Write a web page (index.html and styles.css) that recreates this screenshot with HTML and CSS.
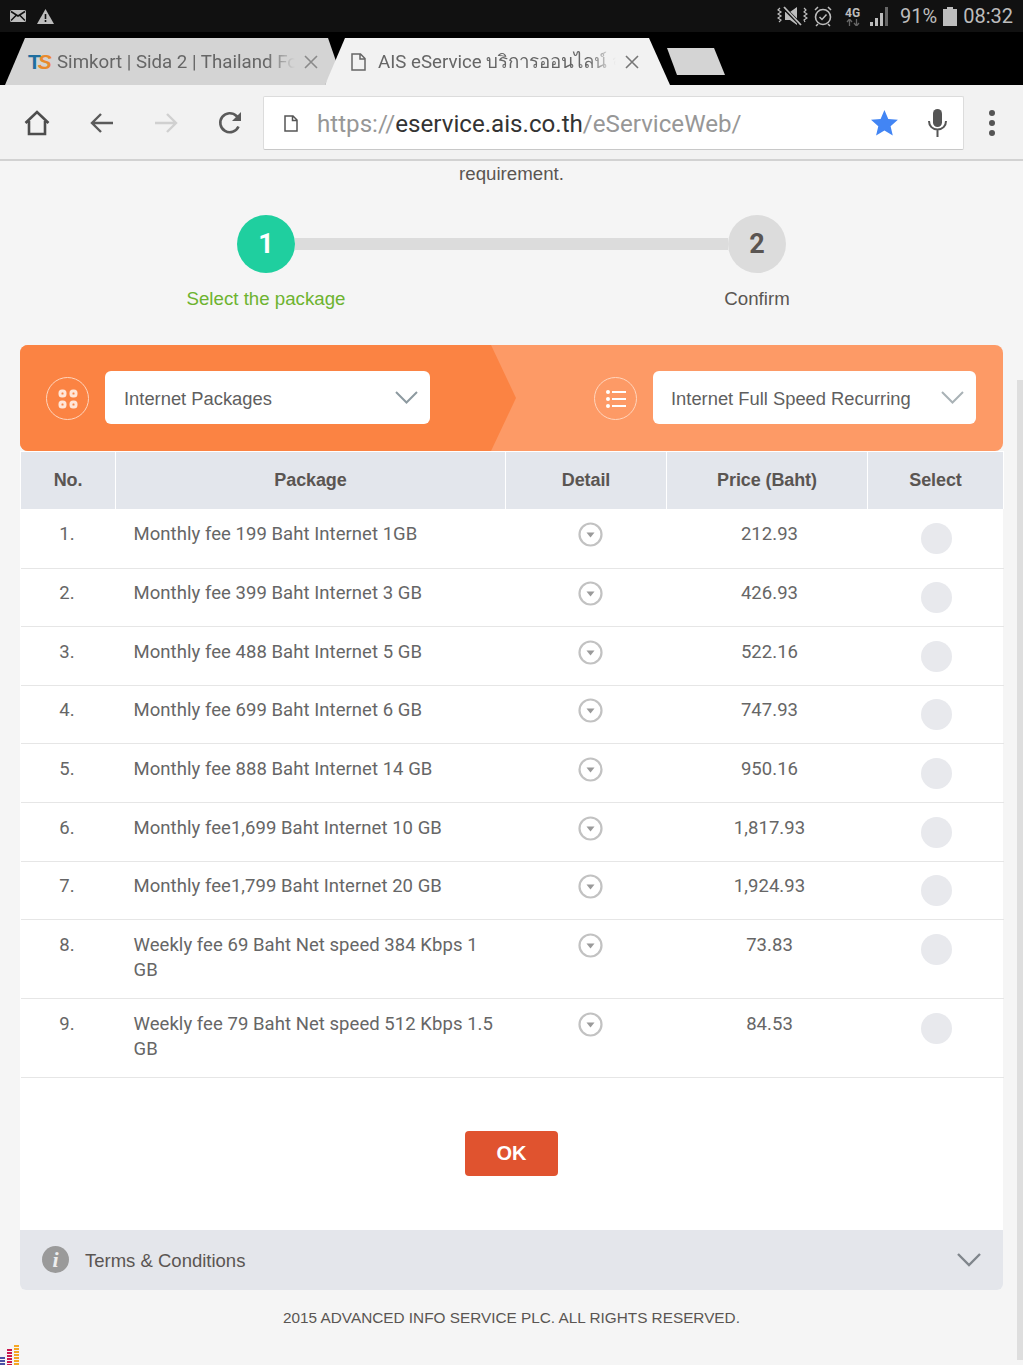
FILE: index.html
```html
<!DOCTYPE html>
<html>
    <head>
        <title>AIS eService</title>
        <link rel="stylesheet" href="styles.css">
    </head>
    <body>
        <div id="status-bar">
            <div class="status-left">
                <svg width="16" height="12" viewBox="0 0 16 12"><rect width="16" height="12" rx="1.500" fill="#bdbdbd"/><path d="M1 1.500 8 6l7-4.500M1 10.500 6 5.500M15 10.500 10 5.500" fill="none" stroke="#111" stroke-width="1.500"/></svg>
                <svg width="17" height="15" viewBox="0 0 17 15"><path d="M8.500 0 17 15H0z" fill="#bdbdbd"/><path d="M8.500 5v5M8.500 11v2" stroke="#111" stroke-width="1.600"/></svg>
            </div>
            <div class="status-right">
                <svg class="ic-mute" width="31" height="20" viewBox="0 0 31 20"><path d="M8 6h5l7-5v18l-7-5H8z" fill="#bdbdbd"/><path d="M6 1l18 18" stroke="#111" stroke-width="3.500"/><path d="M7 1l17 18" stroke="#bdbdbd" stroke-width="1.800"/><path d="M3 2 1 4l3 2-3 2 3 2-3 2 3 2-2 2M27 2l2 2-2 2 3 2-3 2 3 2-3 2 1 2" fill="none" stroke="#bdbdbd" stroke-width="1.200"/></svg>
                <svg class="ic-alarm" width="18" height="21" viewBox="0 0 18 21"><circle cx="9" cy="11" r="7.500" fill="none" stroke="#bdbdbd" stroke-width="1.600"/><path d="M5.500 11l2.500 2.500 4.500-5M1 4l3-3M17 4l-3-3M4 18l-2 2M14 18l2 2" fill="none" stroke="#bdbdbd" stroke-width="1.500"/></svg>
                <div class="net">
                    <span class="net-text">4G</span>
                    <svg width="14" height="7" viewBox="0 0 14 7"><path d="M3.500 7V1M1 3l2.500-3L6 3M10.500 0v6M8 4l2.500 3L13 4" fill="none" stroke="#666" stroke-width="1.300"/></svg>
                </div>
                <svg class="ic-signal" width="19" height="20" viewBox="0 0 19 20"><path d="M0 16h3v4H0zM5 12h3v8H5zM10 7h3v13h-3z" fill="#bdbdbd"/><path d="M15 1h3v19h-3z" fill="#666"/></svg>
                <span class="pct">91%</span>
                <svg class="ic-batt" width="14" height="19" viewBox="0 0 14 19"><path d="M4 0h6v2h4v17H0V2h4z" fill="#bdbdbd"/></svg>
                <span class="clock">08:32</span>
            </div>
        </div>

        <div id="tab-strip">
            <div class="tab tab-off">
                <span class="favicon"><span class="fav-t">T</span><span class="fav-s">S</span></span>
                <span class="tab-title">Simkort | Sida 2 | Thailand Fo</span>
                <svg class="tab-close" width="14" height="14" viewBox="0 0 14 14"><path d="M1 1l12 12M13 1 1 13" stroke="#8a8a8a" stroke-width="1.600"/></svg>
            </div>
            <div class="tab tab-on">
                <svg class="page-ic" width="15" height="18" viewBox="0 0 15 18"><path d="M1 1h8.500L14 5.500V17H1zM9 1v5h5" fill="none" stroke="#666" stroke-width="1.500"/></svg>
                <span class="tab-title">AIS eService บริการออนไลน์ จั</span>
                <svg class="tab-close" width="14" height="14" viewBox="0 0 14 14"><path d="M1 1l12 12M13 1 1 13" stroke="#777" stroke-width="1.600"/></svg>
            </div>
            <div class="tab-new"></div>
        </div>

        <div id="toolbar">
            <svg class="tool-ic" width="26" height="26" viewBox="0 0 26 26"><path d="M1.500 13 13 2l11.500 11M5 11v13h16V11" fill="none" stroke="#4d4d4d" stroke-width="2.600"/></svg>
            <svg class="tool-ic" width="24" height="22" viewBox="0 0 24 22"><path d="M23 11H3M11 2l-9 9 9 9" fill="none" stroke="#5a5a5a" stroke-width="2.400"/></svg>
            <svg class="tool-ic" width="24" height="22" viewBox="0 0 24 22"><path d="M1 11h20M13 2l9 9-9 9" fill="none" stroke="#d0d0d0" stroke-width="2.400"/></svg>
            <svg class="tool-ic" width="24" height="24" viewBox="0 0 24 24"><path d="M20.500 15.500A9.500 9.500 0 1 1 18.500 5l2.500 2.500" fill="none" stroke="#5a5a5a" stroke-width="2.600"/><path d="M23 1v9h-9z" fill="#5a5a5a"/></svg>
            <div id="omnibox">
                <svg class="url-ic" width="14" height="17" viewBox="0 0 14 17"><path d="M1 1h8l4 4v11H1zM8.500 1v4.500H13" fill="none" stroke="#555" stroke-width="1.500"/></svg>
                <span class="url"><span class="url-dim">https://</span>eservice.ais.co.th<span class="url-dim">/eServiceWeb/</span></span>
                <svg class="star" width="28" height="26" viewBox="0 0 28 26"><path d="M14 0l4 9.300 10 .9-7.600 6.600 2.300 9.800L14 21.400 5.300 26.600l2.300-9.800L0 10.200l10-.9z" fill="#4285f4" transform="scale(.96)"/></svg>
                <svg class="mic" width="20" height="28" viewBox="0 0 20 28"><rect x="6" y="0" width="9" height="18" rx="4.500" fill="#555"/><path d="M2 12c0 5 3.500 8.500 8.500 8.500S19 17 19 12M10.500 20v8" fill="none" stroke="#555" stroke-width="2"/></svg>
            </div>
            <div class="menu-dots"><i></i><i></i><i></i></div>
        </div>

        <div id="page">
            <p class="intro">requirement.</p>

            <div class="stepper">
                <div class="step-num step-on">1</div>
                <div class="step-bar"></div>
                <div class="step-num step-off">2</div>
            </div>
            <div class="step-labels">
                <span class="step-lbl lbl-on">Select the package</span>
                <span class="step-lbl">Confirm</span>
            </div>

            <div class="filter-panel">
                <div class="filter-left">
                    <div class="ring">
                        <svg width="20" height="20" viewBox="0 0 20 20"><g fill="none" stroke="#ffe6d8" stroke-width="3"><rect x="2" y="2" width="5" height="5" rx="2"/><rect x="13" y="2" width="5" height="5" rx="2"/><rect x="2" y="13" width="5" height="5" rx="2"/><rect x="13" y="13" width="5" height="5" rx="2"/></g></svg>
                    </div>
                    <div class="select sel-a">
                        <span>Internet Packages</span>
                        <svg width="23" height="13" viewBox="0 0 23 13"><path d="M1 1l10.500 10.500L22 1" fill="none" stroke="#8d9aa0" stroke-width="2"/></svg>
                    </div>
                </div>
                <div class="filter-right">
                    <div class="ring">
                        <svg width="20" height="20" viewBox="0 0 20 20"><path d="M6 3h14M6 10h14M6 17h14" stroke="#fff" stroke-width="2"/><circle cx="2" cy="3" r="2" fill="#fff"/><circle cx="2" cy="10" r="2" fill="#fff"/><circle cx="2" cy="17" r="2" fill="#fff"/></svg>
                    </div>
                    <div class="select sel-b">
                        <span>Internet Full Speed Recurring</span>
                        <svg width="23" height="13" viewBox="0 0 23 13"><path d="M1 1l10.500 10.500L22 1" fill="none" stroke="#a9b2b6" stroke-width="2"/></svg>
                    </div>
                </div>
            </div>

            <div class="card">
                <table class="pkg-table">
                    <colgroup>
                        <col class="c-no"><col class="c-pkg"><col class="c-detail"><col class="c-price"><col class="c-sel">
                    </colgroup>
                    <thead>
                        <tr><th>No.</th><th>Package</th><th>Detail</th><th>Price (Baht)</th><th>Select</th></tr>
                    </thead>
                    <tbody id="rows"></tbody>
                </table>

                <div class="ok-row"><button type="button" class="ok-btn">OK</button></div>

                <div class="terms">
                    <span class="info-ic">i</span>
                    <span class="terms-text">Terms &amp; Conditions</span>
                    <svg width="24" height="14" viewBox="0 0 24 14"><path d="M1 1l11 11L23 1" fill="none" stroke="#80868c" stroke-width="2.400"/></svg>
                </div>
            </div>

            <p class="footer">2015 ADVANCED INFO SERVICE PLC. ALL RIGHTS RESERVED.</p>
        </div>

        <div class="scroll-thumb"></div>
        <svg class="eq-ic" width="20" height="21" viewBox="0 0 20 21">
            <path d="M0 13h5v2H0zM0 16h5v2H0zM0 19h5v2H0z" fill="#4a4fa5"/>
            <path d="M7 5h5v2H7zM7 8h5v2H7zM7 11h5v2H7zM7 14h5v2H7zM7 17h5v2H7zM7 20h5v1H7z" fill="#c8184f"/>
            <path d="M14 1h5v2h-5zM14 4h5v2h-5zM14 7h5v2h-5zM14 10h5v2h-5zM14 13h5v2h-5zM14 16h5v2h-5zM14 19h5v2h-5z" fill="#f5a623"/>
        </svg>

        <script>
            var packages = [
                ['1.', 'Monthly fee 199 Baht Internet 1GB', '212.93'],
                ['2.', 'Monthly fee 399 Baht Internet 3 GB', '426.93'],
                ['3.', 'Monthly fee 488 Baht Internet 5 GB', '522.16'],
                ['4.', 'Monthly fee 699 Baht Internet 6 GB', '747.93'],
                ['5.', 'Monthly fee 888 Baht Internet 14 GB', '950.16'],
                ['6.', 'Monthly fee1,699 Baht Internet 10 GB', '1,817.93'],
                ['7.', 'Monthly fee1,799 Baht Internet 20 GB', '1,924.93'],
                ['8.', 'Weekly fee 69 Baht Net speed 384 Kbps 1 GB', '73.83'],
                ['9.', 'Weekly fee 79 Baht Net speed 512 Kbps 1.5 GB', '84.53']
            ];
            var html = '';
            packages.forEach(function(p){
                html += '<tr><td class="td-no">' + p[0] + '</td>' +
                    '<td class="td-pkg">' + p[1] + '</td>' +
                    '<td class="td-detail"><svg width="25" height="25" viewBox="0 0 25 25"><circle cx="12.500" cy="12.500" r="11" fill="#fff" stroke="#c2c2c2" stroke-width="2.200"/><path d="M8.500 10.500h8l-4 5z" fill="#9a9a9a"/></svg></td>' +
                    '<td class="td-price">' + p[2] + '</td>' +
                    '<td class="td-sel"><span class="radio"></span></td></tr>';
            });
            document.getElementById('rows').innerHTML = html;
        </script>
    </body>
</html>
```

FILE: styles.css
```css
html, body{
    margin: 0;
    padding: 0;
    height: 1365px;
    overflow: hidden;
    background-color: #f5f5f5;
    font-family: "Liberation Sans", Arial, sans-serif;
}
#status-bar{
    height: 32px;
    background-color: #111;
    display: flex;
    justify-content: space-between;
    align-items: center;
    padding: 0 10px;
    box-sizing: border-box;
}
.status-left{
    display: flex;
    align-items: center;
    gap: 11px;
}
.status-right{
    display: flex;
    align-items: center;
    color: #bdbdbd;
    font-family: Roboto, sans-serif;
    font-size: 20px;
}
.ic-alarm{
    margin-left: 6px;
}
.net{
    display: flex;
    flex-direction: column;
    align-items: center;
    margin-left: 13px;
    width: 15px;
}
.net-text{
    font-size: 12px;
    font-weight: 700;
    line-height: 12px;
}
.ic-signal{
    margin-left: 10px;
}
.pct{
    margin-left: 11px;
}
.ic-batt{
    margin-left: 6px;
}
.clock{
    margin-left: 6px;
}

#tab-strip{
    height: 53px;
    background-color: #000;
    display: flex;
    align-items: flex-end;
    padding-left: 5px;
    font-family: Roboto, "Noto Sans", sans-serif;
    font-size: 18.700px;
}
.tab{
    height: 47px;
    display: flex;
    align-items: center;
    box-sizing: border-box;
    flex: none;
}
.tab-off{
    width: 332px;
    background-color: #d4d4d4;
    color: #666;
    padding-left: 23px;
    clip-path: polygon(0 100%, 20px 0, 323px 0, 332px 26px, 320px 100%);
}
.tab-on{
    width: 345px;
    margin-left: -12px;
    background-color: #f2f2f2;
    color: #666;
    padding-left: 26px;
    clip-path: polygon(0 100%, 20px 0, 324px 0, 345px 100%);
}
.favicon{
    width: 24px;
    margin-right: 5px;
    font-family: "Liberation Sans", sans-serif;
    font-size: 21px;
    font-weight: 700;
    letter-spacing: -3px;
    line-height: 24px;
}
.fav-t{
    color: #1f6f9f;
}
.fav-s{
    color: #e98a2c;
    font-style: italic;
}
.tab-title{
    white-space: nowrap;
    -webkit-mask-image: linear-gradient(to right, #000 88%, transparent 100%);
    mask-image: linear-gradient(to right, #000 88%, transparent 100%);
}
.tab-off .tab-title{
    width: 238px;
}
.tab-on .tab-title{
    width: 238px;
}
.tab-close{
    margin-left: 9px;
    flex: none;
}
.page-ic{
    margin-right: 12px;
    flex: none;
}
.tab-new{
    width: 58px;
    height: 27px;
    margin-left: -3px;
    margin-bottom: 10px;
    background-color: #d4d4d4;
    clip-path: polygon(0 0, 47px 0, 58px 100%, 10px 100%);
}

#toolbar{
    height: 76px;
    box-sizing: border-box;
    background-color: #f2f2f2;
    border-bottom: 2px solid #d2d2d2;
    display: flex;
    align-items: center;
    padding: 2px 0 0 24px;
}
.tool-ic{
    flex: none;
    margin-right: 40px;
}
.tool-ic:last-of-type{
    margin-right: 0;
}
#omnibox{
    width: 701px;
    height: 54px;
    margin-left: 21px;
    box-sizing: border-box;
    background-color: #fff;
    border: 1px solid #dcdcdc;
    border-bottom-color: #c8c8c8;
    border-radius: 2px;
    display: flex;
    align-items: center;
    padding-left: 20px;
}
.url{
    margin-left: 19px;
    padding-top: 2px;
    font-family: Roboto, sans-serif;
    font-size: 24.150px;
    color: #333;
    white-space: nowrap;
}
.url-dim{
    color: #979797;
}
.star{
    margin-left: auto;
}
.mic{
    margin-left: 28px;
    margin-right: 16px;
}
.menu-dots{
    margin-left: 25px;
    display: flex;
    flex-direction: column;
    gap: 4px;
}
.menu-dots i{
    display: block;
    width: 6px;
    height: 6px;
    border-radius: 50%;
    background-color: #555;
}

#page{
    padding: 0 20px;
    color: #5a5552;
}
.intro{
    margin: 0;
    padding-top: 2px;
    text-align: center;
    font-size: 18.700px;
    line-height: 22px;
}
.stepper{
    display: flex;
    align-items: center;
    margin-top: 30px;
    padding-left: 217px;
}
.step-num{
    width: 58px;
    height: 58px;
    border-radius: 50%;
    flex: none;
    display: flex;
    justify-content: center;
    align-items: center;
    font-size: 27px;
    font-weight: 700;
    font-family: Roboto, sans-serif;
}
.step-on{
    background-color: #1fcf9f;
    color: #fff;
}
.step-off{
    background-color: #dcdcdc;
    color: #5a5552;
}
.step-bar{
    width: 433px;
    height: 12px;
    background-color: #dcdcdc;
}
.step-labels{
    display: flex;
    justify-content: space-between;
    padding: 0 146px;
    margin-top: 15px;
}
.step-lbl{
    width: 200px;
    text-align: center;
    font-size: 18.700px;
    line-height: 22px;
}
.lbl-on{
    color: #6db32f;
}

.filter-panel{
    margin-top: 35px;
    height: 106px;
    border-radius: 8px;
    background-color: #fd9a66;
    display: flex;
    overflow: hidden;
}
.filter-left{
    width: 496px;
    flex: none;
    background-color: #fb8343;
    clip-path: polygon(0 0, 471px 0, 496px 50%, 471px 100%, 0 100%);
    display: flex;
    align-items: center;
    padding-left: 26px;
    box-sizing: border-box;
}
.filter-right{
    flex: 1;
    display: flex;
    align-items: center;
    justify-content: flex-end;
    padding-right: 27px;
}
.ring{
    width: 43px;
    height: 43px;
    box-sizing: border-box;
    border: 1.500px solid #ffd5bd;
    border-radius: 50%;
    display: flex;
    justify-content: center;
    align-items: center;
    flex: none;
    margin-top: 1px;
}
.select{
    height: 53px;
    background-color: #fff;
    border-radius: 6px;
    display: flex;
    justify-content: space-between;
    align-items: center;
    box-sizing: border-box;
    font-size: 18.350px;
    color: #5f5f5f;
    margin-bottom: 1px;
}
.select span{
    padding-top: 3px;
}
.sel-a{
    width: 325px;
    margin-left: 16px;
    padding: 0 12px 0 19px;
}
.sel-b{
    width: 323px;
    margin-left: 16px;
    padding: 0 12px 0 18px;
}

.card{
    background-color: #fff;
    border-radius: 0 0 6px 6px;
}
.pkg-table{
    width: 983px;
    table-layout: fixed;
    border-collapse: collapse;
}
.c-no{ width: 95px; }
.c-pkg{ width: 390px; }
.c-detail{ width: 161px; }
.c-price{ width: 201px; }
.c-sel{ width: 136px; }
.pkg-table th{
    height: 57px;
    padding: 1px 0 0 0;
    box-sizing: border-box;
    background-color: #e3e6ec;
    background-clip: padding-box;
    border-left: 1px solid #fff;
    border-top: 1px solid #fff;
    font-size: 18px;
    letter-spacing: -0.100px;
    font-weight: 700;
    color: #5a5552;
    text-align: center;
}
.pkg-table th:last-child{
    border-right: 1px solid #fff;
}
.pkg-table td{
    padding: 12.500px 0 15.170px 0;
    vertical-align: top;
    border-bottom: 1px solid #e6e6e6;
    font-family: Roboto, sans-serif;
    font-size: 18.500px;
    line-height: 25px;
    letter-spacing: 0.050px;
    color: #666;
}
.pkg-table tr:first-child td{
    padding-top: 13.500px;
    padding-bottom: 15.500px;
}
.pkg-table td.td-no{
    text-align: center;
    padding-right: 2px;
}
.pkg-table td.td-pkg{
    padding-left: 18px;
    padding-right: 4px;
}
.td-detail, .td-sel{
    text-align: center;
}
.pkg-table td.td-detail{
    padding-left: 8px;
}
.td-detail svg{
    display: block;
    margin: 0 auto;
}
.pkg-table td.td-price{
    text-align: center;
    padding-left: 5px;
}
.radio{
    display: block;
    width: 31px;
    height: 31px;
    border-radius: 50%;
    background-color: #e8e9ed;
    margin: 1px auto -2px auto;
    position: relative;
    left: 1px;
}
.ok-row{
    display: flex;
    justify-content: center;
    padding: 53px 0 54px 0;
}
.ok-btn{
    width: 93px;
    height: 45px;
    border: none;
    border-radius: 4px;
    background-color: #e0532f;
    color: #fff;
    font-family: "Liberation Sans", Arial, sans-serif;
    font-size: 20px;
    font-weight: 700;
}
.terms{
    height: 60px;
    background-color: #e4e6eb;
    border-radius: 0 0 6px 6px;
    display: flex;
    align-items: center;
    padding: 0 22px;
    font-size: 18.500px;
    color: #5a5552;
}
.info-ic{
    width: 27px;
    height: 27px;
    border-radius: 50%;
    background-color: #9a9a9a;
    color: #eee;
    font-family: "Liberation Serif", serif;
    font-size: 22px;
    font-weight: 700;
    font-style: italic;
    display: flex;
    justify-content: center;
    align-items: center;
}
.terms-text{
    margin-left: 16px;
    padding-top: 2px;
    flex: 1;
}
.footer{
    margin: 18px 0 0 0;
    text-align: center;
    font-size: 15.330px;
    line-height: 20px;
    color: #5a5552;
}
.scroll-thumb{
    position: absolute;
    left: 1017px;
    top: 380px;
    width: 6px;
    height: 980px;
    background-color: #dedede;
}
.eq-ic{
    position: absolute;
    left: 0;
    top: 1344px;
}
```
